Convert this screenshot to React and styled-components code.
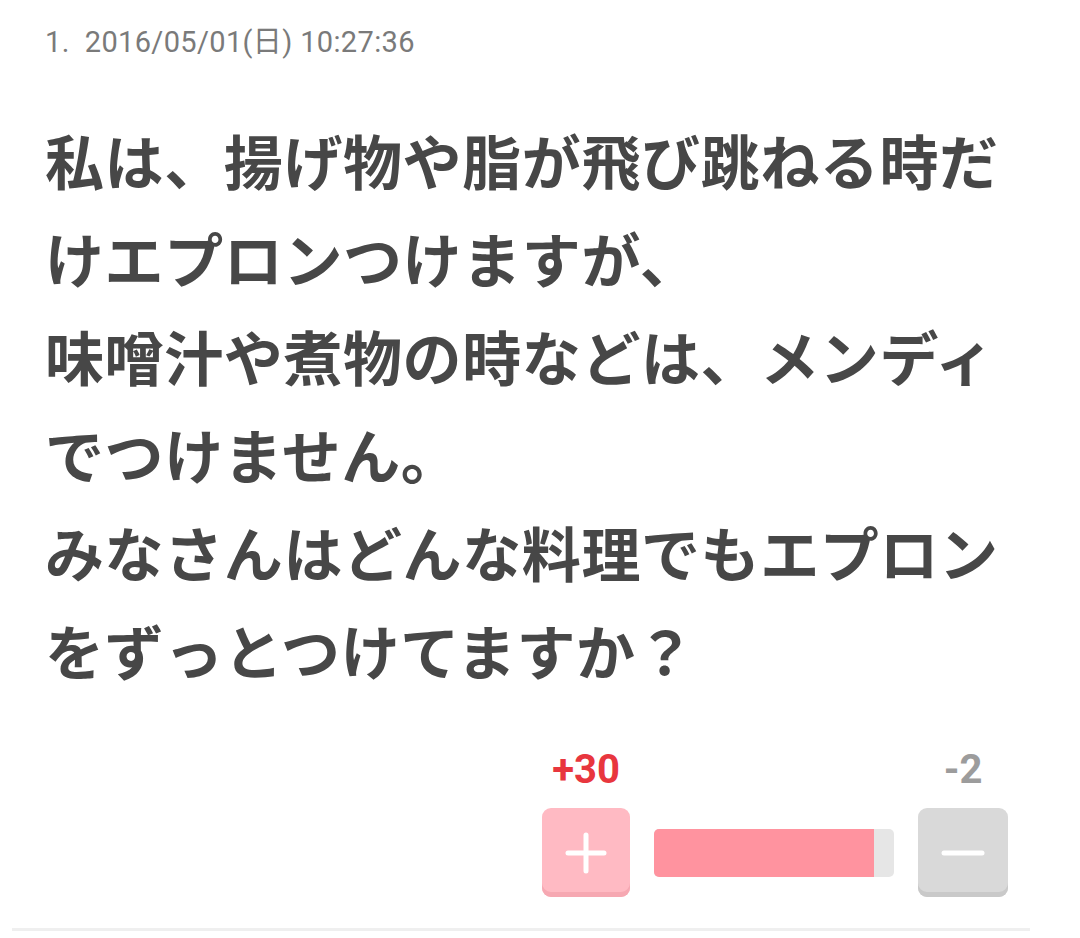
import styled, { createGlobalStyle } from "styled-components";

const GlobalStyle = createGlobalStyle`
  html, body {
    margin: 0;
    padding: 0;
    background: #ffffff;
  }
`;

const Page = styled.div`
  width: 1080px;
  padding-top: 22px;
  font-family: Roboto, "Noto Sans CJK JP", sans-serif;
`;

const Entry = styled.div`
  padding: 0 45px;
`;

const DateLine = styled.div`
  font-size: 29px;
  line-height: 40px;
  letter-spacing: 0.35px;
  color: #7a7a7a;
`;

const Body = styled.p`
  width: 985px;
  margin: 49px 0 0 0;
  font-family: "Noto Sans CJK JP", sans-serif;
  font-weight: 700;
  font-size: 59px;
  line-height: 98px;
  letter-spacing: 0.6px;
  color: #474747;
`;

const VoteArea = styled.div`
  display: grid;
  grid-template-columns: 88px 240px 90px;
  grid-template-rows: 44px 89px;
  column-gap: 24px;
  row-gap: 16px;
  justify-content: end;
  margin: 49px 27px 0 0;
`;

const Count = styled.div`
  font-size: 40px;
  font-weight: 700;
  line-height: 44px;
  text-align: center;
  color: ${(p) => p.$color};
`;

const VoteButton = styled.button`
  display: flex;
  align-items: center;
  justify-content: center;
  width: 100%;
  height: 89px;
  padding: 0;
  border: none;
  border-radius: 9px;
  background: ${(p) => p.$bg};
  box-shadow: inset 0 -5px 0 ${(p) => p.$edge};
  cursor: pointer;
`;

const Bar = styled.div`
  align-self: center;
  height: 48px;
  border-radius: 5px;
  background: #e6e6e6;
  overflow: hidden;
  display: flex;
`;

const BarFill = styled.div`
  height: 100%;
  background: #ff939f;
`;

const Divider = styled.div`
  margin: 31px 50px 0 12px;
  height: 3px;
  background: #efefef;
`;

export default function App() {
  const plus = 30;
  const minus = 2;
  const ratio = 0.915;

  return (
    <>
      <GlobalStyle />
      <Page>
        <Entry>
          <DateLine>1.&nbsp;&nbsp;2016/05/01(日) 10:27:36</DateLine>
          <Body>
            私は、揚げ物や脂が飛び跳ねる時だけエプロンつけますが、
            <br />
            味噌汁や煮物の時などは、メンディでつけません。
            <br />
            みなさんはどんな料理でもエプロンをずっとつけてますか？
          </Body>
          <VoteArea>
            <Count $color="#e8363e">+{plus}</Count>
            <div />
            <Count $color="#9c9c9c">-{minus}</Count>
            <VoteButton $bg="#ffbac3" $edge="#f6a8b2" aria-label="plus">
              <svg width="44" height="44" viewBox="0 0 44 44">
                <path d="M22 4v36M4 22h36" stroke="#fff" strokeWidth="5" strokeLinecap="round" />
              </svg>
            </VoteButton>
            <Bar>
              <BarFill style={{ width: `${ratio * 100}%` }} />
            </Bar>
            <VoteButton $bg="#d9d9d9" $edge="#c9c9c9" aria-label="minus">
              <svg width="44" height="44" viewBox="0 0 44 44">
                <path d="M3 22h38" stroke="#fff" strokeWidth="5" strokeLinecap="round" />
              </svg>
            </VoteButton>
          </VoteArea>
        </Entry>
        <Divider />
      </Page>
    </>
  );
}
